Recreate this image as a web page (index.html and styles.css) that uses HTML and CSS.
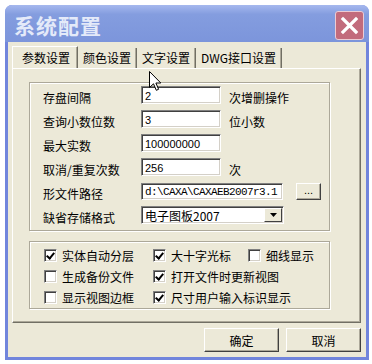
FILE: index.html
```html
<!DOCTYPE html>
<html lang="zh-CN">
<head>
<meta charset="utf-8">
<title>系统配置</title>
<link rel="stylesheet" href="styles.css">
</head>
<body>
<div class="window">
  <div class="titlebar">
    <span class="title">系统配置</span>
    <div class="close"><svg width="19" height="19" viewBox="0 0 19 19"><path d="M3 3 L16 16 M16 3 L3 16" stroke="#fff" stroke-width="3.2" stroke-linecap="square"/></svg></div>
  </div>
  <div class="body">
    <div class="tabs">
      <div class="tab active">参数设置</div>
      <div class="tab">颜色设置</div>
      <div class="tab">文字设置</div>
      <div class="tab">DWG接口设置</div>
    </div>
    <div class="panel">
      <div class="group g1">
        <div class="row"><span class="label">存盘间隔</span><span class="input">2</span><span class="suffix">次增删操作</span></div>
        <div class="row"><span class="label">查询小数位数</span><span class="input">3</span><span class="suffix">位小数</span></div>
        <div class="row"><span class="label">最大实数</span><span class="input">100000000</span></div>
        <div class="row"><span class="label">取消/重复次数</span><span class="input">256</span><span class="suffix">次</span></div>
        <div class="row"><span class="label">形文件路径</span><span class="input path">d:\CAXA\CAXAEB2007r3.1</span><span class="btn dots">...</span></div>
        <div class="row"><span class="label">缺省存储格式</span><span class="combo"><span class="combo-text">电子图板2007</span><span class="combo-btn"><svg width="7" height="4" viewBox="0 0 7 4"><path d="M0 0 H7 L3.5 4 Z" fill="#000"/></svg></span></span></div>
      </div>
      <div class="group g2">
        <label class="cb"><span class="box checked"></span>实体自动分层</label>
        <label class="cb"><span class="box checked"></span>大十字光标</label>
        <label class="cb"><span class="box"></span>细线显示</label>
        <label class="cb"><span class="box"></span>生成备份文件</label>
        <label class="cb span2"><span class="box checked"></span>打开文件时更新视图</label>
        <label class="cb"><span class="box"></span>显示视图边框</label>
        <label class="cb span2"><span class="box checked"></span>尺寸用户输入标识显示</label>
      </div>
    </div>
    <div class="actions">
      <span class="btn action">确定</span>
      <span class="btn action">取消</span>
    </div>
  </div>
  <svg class="cursor" width="13" height="21" viewBox="0 0 13 21"><path d="M0.5 0.5 L0.5 16.5 L4.5 12.8 L7.3 19.3 L9.6 18.3 L6.9 12 L11.8 12 Z" fill="#fff" stroke="#000" stroke-width="1" stroke-linejoin="miter"/></svg>
</div>
</body>
</html>
```

FILE: styles.css
```css
html, body {
  margin: 0;
  padding: 0;
  background: #fff;
}
body {
  font-family: "Noto Sans CJK SC", "Liberation Sans", sans-serif;
  font-size: 12px;
  color: #000;
}
.window {
  position: relative;
  margin: 5px 0 0 5px;
  width: 364px;
  height: 355px;
  background: #7185dc;
  border-radius: 7px 7px 0 0;
  display: flex;
  flex-direction: column;
}
.titlebar {
  height: 37px;
  box-sizing: border-box;
  display: flex;
  align-items: flex-end;
  justify-content: space-between;
  padding: 0 5px 2px 9px;
  background: linear-gradient(#a6b8ee, #849ddf 25%, #7c95db);
  border-radius: 7px 7px 0 0;
}
.title {
  font-size: 21px;
  font-weight: bold;
  color: #e4eaf9;
  line-height: 30px;
  letter-spacing: 1px;
}
.close {
  width: 29px;
  height: 29px;
  box-sizing: border-box;
  border: 1px solid #ecccd4;
  border-radius: 3px;
  background: #c26b7c;
  display: flex;
  align-items: center;
  justify-content: center;
}
.body {
  flex: 1;
  margin: 0 3px 3px;
  background: #ece9d8;
  padding: 4px 5px 0 4px;
  display: flex;
  flex-direction: column;
}
.tabs {
  height: 22px;
  display: flex;
  align-items: flex-end;
}
.tab {
  height: 20px;
  line-height: 20px;
  padding: 0 5px;
  border-right: 1px solid #716f64;
  box-shadow: inset -1px 0 0 #aca899;
  white-space: nowrap;
}
.tab.active {
  height: 22px;
  line-height: 22px;
  padding: 0 6px 0 9px;
  border-left: 1px solid #fff;
  border-top: 1px solid #fff;
  box-sizing: border-box;
  width: 66px;
}
.panel {
  height: 255px;
  box-sizing: border-box;
  border-top: 1px solid #fff;
  border-left: 1px solid #fff;
  border-right: 1px solid #716f64;
  border-bottom: 1px solid #716f64;
  box-shadow: inset -1px -1px 0 #aca899;
  padding: 13px 0 0 16px;
  display: flex;
  flex-direction: column;
  gap: 10px;
}
.group {
  width: 301px;
  box-sizing: border-box;
  border: 1px solid #aca899;
  box-shadow: inset 1px 1px 0 #fff, 1px 1px 0 #fff;
}
.g1 {
  height: 149px;
  padding: 3px 0 0 13px;
  display: flex;
  flex-direction: column;
  gap: 6px;
}
.row {
  display: flex;
  align-items: center;
  height: 18px;
}
.label {
  width: 98px;
  padding-top: 5px;
  flex: none;
}
.suffix {
  margin-left: 8px;
  padding-top: 4px;
}
.input {
  width: 80px;
  height: 18px;
  box-sizing: border-box;
  background: #fff;
  border-top: 1px solid #808080;
  border-left: 1px solid #808080;
  border-right: 1px solid #fff;
  border-bottom: 1px solid #fff;
  box-shadow: inset 1px 1px 0 #404040, inset -1px -1px 0 #d4d0c8;
  padding: 2px 0 0 3px;
  font-family: "Liberation Sans", sans-serif;
  font-size: 11px;
  line-height: 14px;
}
.input.path {
  width: 142px;
  height: 17px;
  font-family: "Liberation Mono", monospace;
  font-size: 11px;
  letter-spacing: -0.6px;
  padding-top: 1px;
}
.btn {
  box-sizing: border-box;
  background: #ece9d8;
  border-top: 1px solid #fff;
  border-left: 1px solid #fff;
  border-right: 1px solid #404040;
  border-bottom: 1px solid #404040;
  box-shadow: inset -1px -1px 0 #aca899;
  display: flex;
  align-items: center;
  justify-content: center;
}
.dots {
  width: 25px;
  height: 17px;
  margin-left: 13px;
  font-family: "Liberation Sans", sans-serif;
  font-size: 11px;
  line-height: 10px;
  padding-bottom: 3px;
}
.combo {
  width: 143px;
  height: 18px;
  box-sizing: border-box;
  background: #fff;
  border-top: 1px solid #808080;
  border-left: 1px solid #808080;
  border-right: 1px solid #fff;
  border-bottom: 1px solid #fff;
  box-shadow: inset 1px 1px 0 #404040, inset -1px -1px 0 #d4d0c8;
  display: flex;
  padding: 1px;
}
.combo-text {
  flex: 1;
  padding: 1px 0 0 2px;
  line-height: 14px;
}
.combo-btn {
  width: 18px;
  box-sizing: border-box;
  background: #ece9d8;
  border-top: 1px solid #fff;
  border-left: 1px solid #fff;
  border-right: 1px solid #404040;
  border-bottom: 1px solid #404040;
  display: flex;
  align-items: center;
  justify-content: center;
}
.g2 {
  height: 68px;
  padding: 6px 0 0 14px;
  display: grid;
  grid-template-columns: 109px 95px 1fr;
  grid-auto-rows: 21px;
}
.cb {
  display: flex;
  align-items: center;
  gap: 5px;
  height: 14px;
  white-space: nowrap;
}
.span2 {
  grid-column: span 2;
}
.box {
  width: 13px;
  height: 13px;
  box-sizing: border-box;
  background: #fff;
  border-top: 1px solid #808080;
  border-left: 1px solid #808080;
  border-right: 1px solid #fff;
  border-bottom: 1px solid #fff;
  box-shadow: inset 1px 1px 0 #404040, inset -1px -1px 0 #d4d0c8;
  position: relative;
  flex: none;
}
.box.checked::after {
  content: "";
  position: absolute;
  left: 2px;
  top: 1px;
  width: 3px;
  height: 6px;
  border-right: 2px solid #000;
  border-bottom: 2px solid #000;
  transform: translate(1px, 0) rotate(40deg);
}
.actions {
  margin-top: 5px;
  display: flex;
  justify-content: flex-end;
  gap: 7px;
}
.action {
  width: 75px;
  height: 24px;
  font-size: 12px;
}
.cursor {
  position: absolute;
  left: 144px;
  top: 66px;
}
```
